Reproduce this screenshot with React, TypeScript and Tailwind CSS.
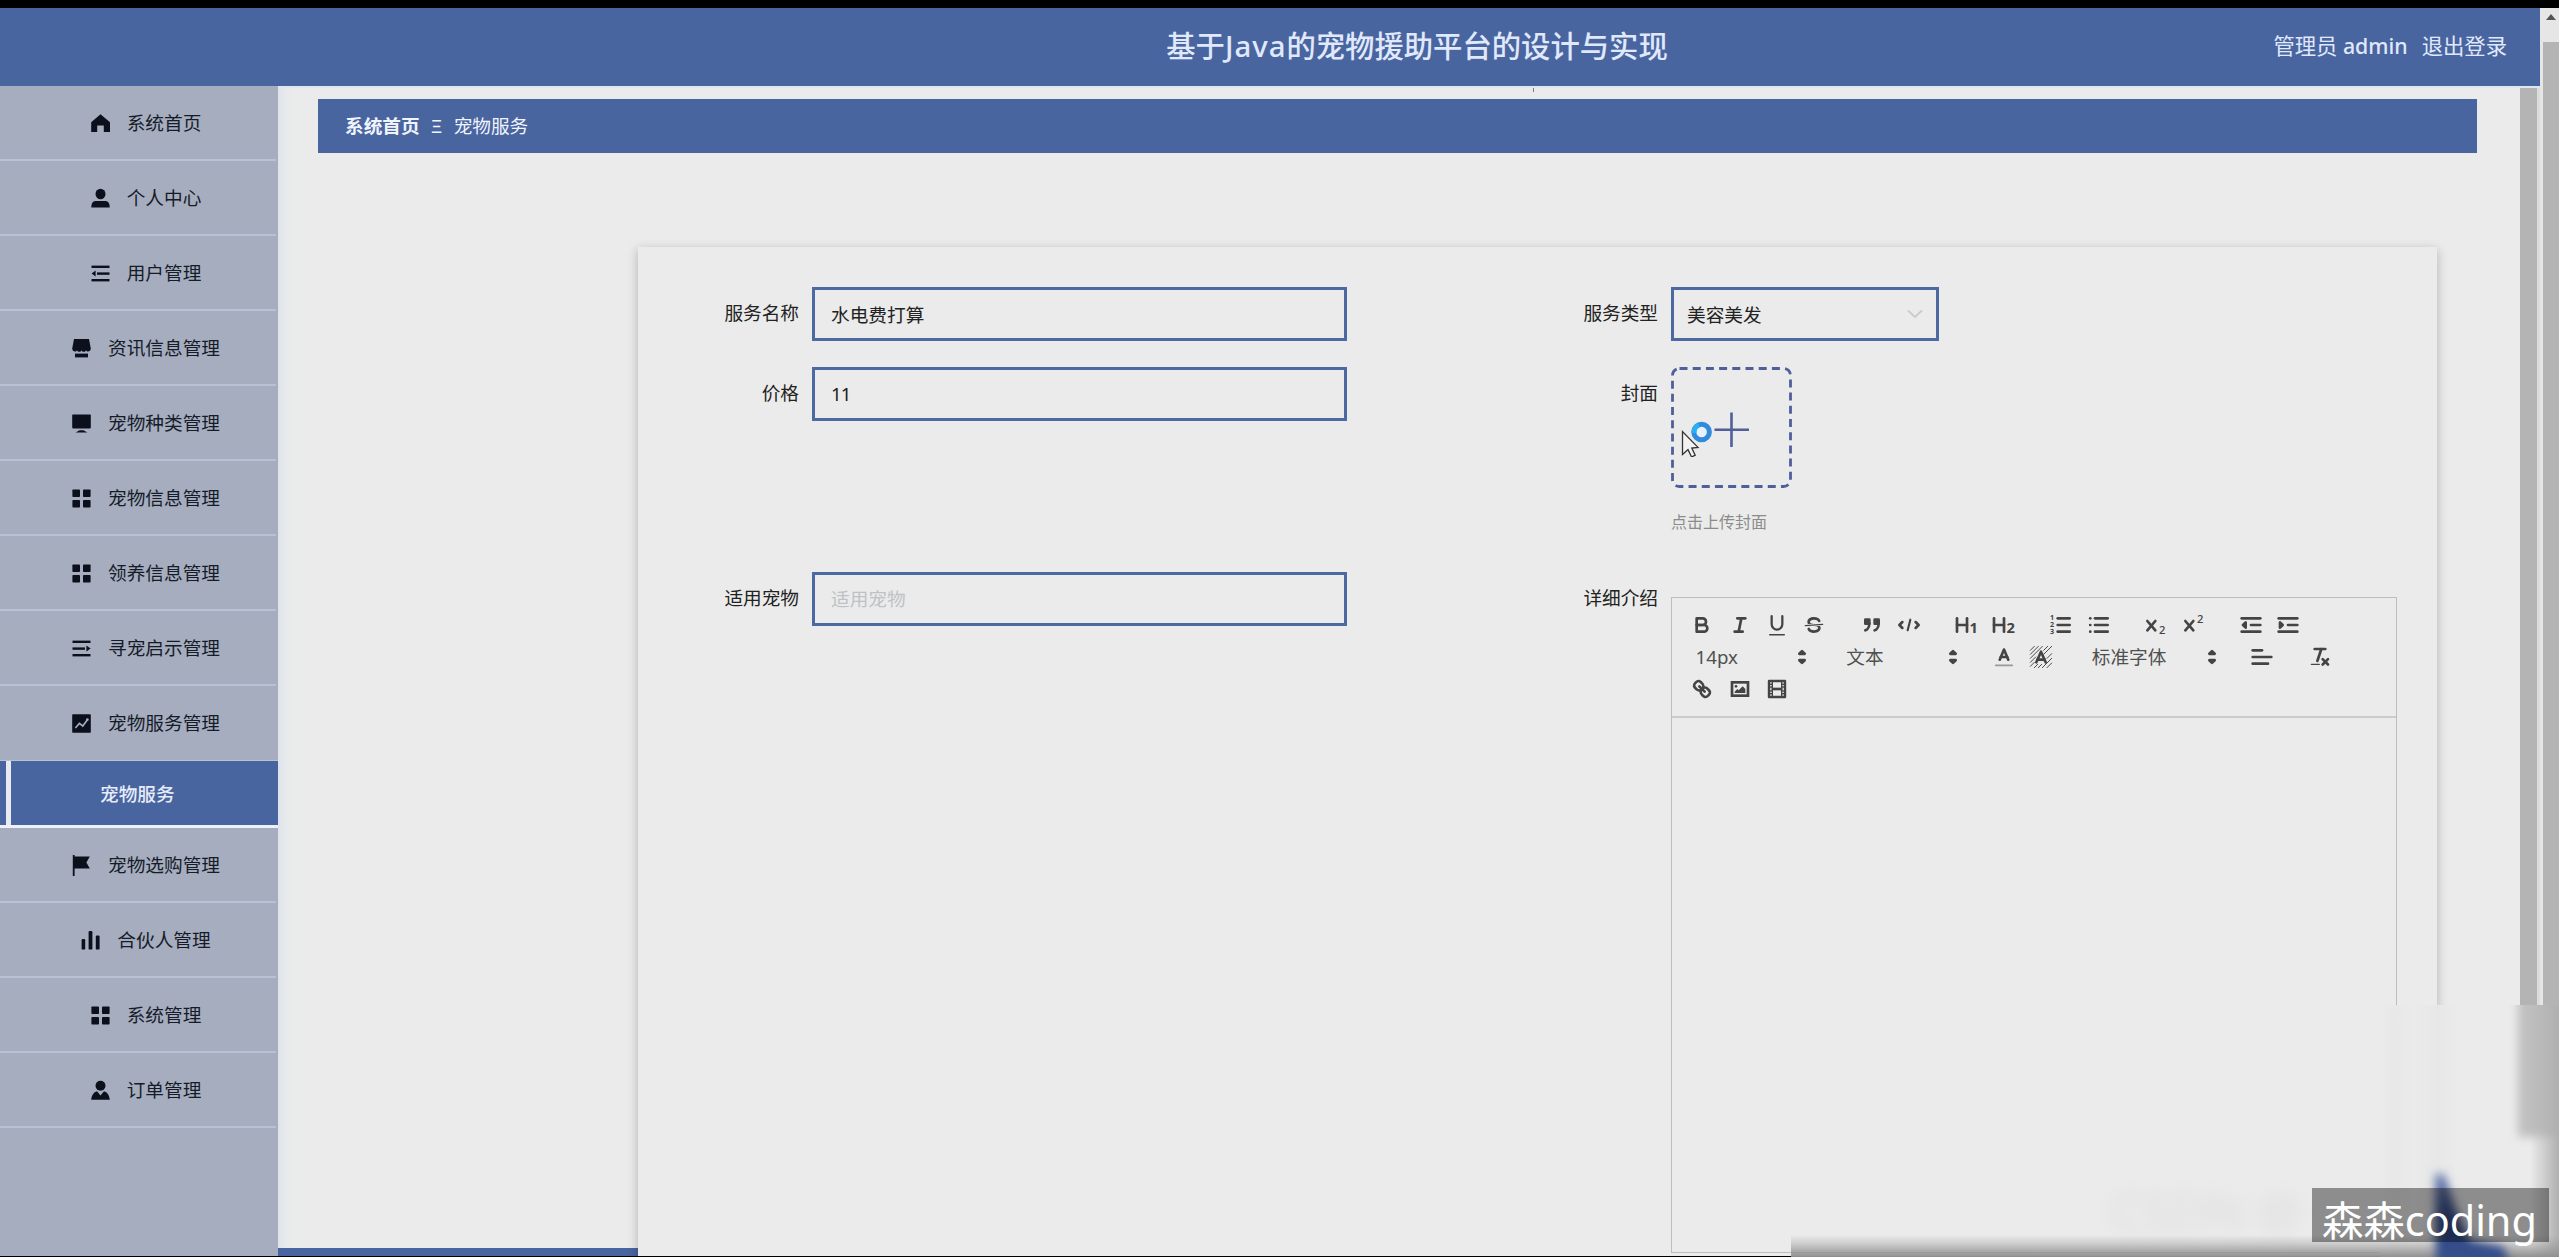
import React from "react";

const sideIcons: Record<string, React.ReactNode> = {
  home: <path d="M9.5 0.2 L19 8.2 V18 H12.8 V11.6 H6.2 V18 H0.2 V8.2 Z" />,
  user: (
    <>
      <ellipse cx="9.5" cy="5" rx="5" ry="5.2" />
      <path d="M0.3 18.5 C0.3 14 2 12 5 12 H14 C17 12 18.7 14 18.7 18.5 Z" />
    </>
  ),
  fold: (
    <>
      <rect x="0.5" y="1.6" width="18" height="2.4" />
      <rect x="6" y="8.4" width="12.5" height="2.4" />
      <rect x="0.5" y="15" width="18" height="2.4" />
      <path d="M4.6 6.6 V12.6 L0.6 9.6 Z" />
    </>
  ),
  unfold: (
    <>
      <rect x="0.5" y="1.6" width="18" height="2.4" />
      <rect x="0.5" y="8.4" width="12.5" height="2.4" />
      <rect x="0.5" y="15" width="18" height="2.4" />
      <path d="M14.4 6.6 V12.6 L18.6 9.6 Z" />
    </>
  ),
  shop: (
    <>
      <path d="M2 0 H17 L18.8 9.6 C18.8 13 14.6 13.4 14 11.2 C13.4 13.4 10 13.4 9.5 11.2 C9 13.4 5.6 13.4 5 11.2 C4.4 13.4 0.2 13 0.2 9.6 Z" />
      <path d="M3 14.6 H16 V18.4 H3 Z" />
    </>
  ),
  platform: (
    <>
      <rect x="0.2" y="0.4" width="18.6" height="14" rx="0.8" />
      <path d="M7.6 16.2 H11.4 L15.4 18.6 H3.6 Z" />
    </>
  ),
  menu: (
    <>
      <rect x="0.4" y="0.4" width="7.6" height="7.6" rx="0.8" />
      <rect x="11" y="0.4" width="7.6" height="7.6" rx="0.8" />
      <rect x="0.4" y="11" width="7.6" height="7.6" rx="0.8" />
      <rect x="11" y="11" width="7.6" height="7.6" rx="0.8" />
    </>
  ),
  marketing: (
    <>
      <rect x="0.2" y="0.2" width="18.6" height="18.6" rx="0.8" />
      <path d="M3.4 14 L7.4 9.4 L10.8 12 L15.6 5.6" fill="none" stroke="#a5adbf" strokeWidth="1.6" />
      <circle cx="15.4" cy="5.6" r="1.3" fill="#a5adbf" />
    </>
  ),
  flag: <path d="M0.8 -1 H2.6 V0.4 H17.8 L14.4 6.6 L17.8 12.6 H2.6 V20 H0.8 Z" />,
  data: (
    <>
      <rect x="0.6" y="8" width="3.6" height="10.6" rx="1.2" />
      <rect x="7.6" y="0" width="3.8" height="18.6" rx="1.2" />
      <rect x="14.8" y="4.6" width="3.8" height="14" rx="1.2" />
    </>
  ),
  custom: (
    <>
      <circle cx="9.5" cy="4.8" r="5" />
      <path d="M0.2 18.8 C0.6 14.4 2.6 11 6 10.2 L9.5 14.6 L13 10.2 C16.4 11 18.4 14.4 18.8 18.8 Z" />
    </>
  ),
};

function SideItem({ icon, label }: { icon: string; label: string }) {
  return (
    <div className="flex h-[75px] w-[276px] shrink-0 items-center justify-center gap-[17px] border-b-2 border-[#b7c2d6] pl-4 pt-[2px] text-[18.67px] leading-none text-[#161b28]">
      <svg width="19" height="19" viewBox="0 0 19 19" overflow="visible" fill="#0b101c">
        {sideIcons[icon]}
      </svg>
      <span>{label}</span>
    </div>
  );
}

const topItems: [string, string][] = [
  ["home", "系统首页"],
  ["user", "个人中心"],
  ["fold", "用户管理"],
  ["shop", "资讯信息管理"],
  ["platform", "宠物种类管理"],
  ["menu", "宠物信息管理"],
  ["menu", "领养信息管理"],
  ["unfold", "寻宠启示管理"],
];

const bottomItems: [string, string][] = [
  ["flag", "宠物选购管理"],
  ["data", "合伙人管理"],
  ["menu", "系统管理"],
  ["custom", "订单管理"],
];

function Sidebar() {
  return (
    <aside className="flex w-[278px] shrink-0 flex-col bg-[#a5adbf]">
      {topItems.map(([i, l]) => (
        <SideItem key={l} icon={i} label={l} />
      ))}
      <div className="flex h-[74px] w-[276px] shrink-0 items-center justify-center gap-[17px] pl-4 text-[18.67px] leading-none text-[#161b28]">
        <svg width="19" height="19" viewBox="0 0 19 19" fill="#0b101c">
          {sideIcons.marketing}
        </svg>
        <span>宠物服务管理</span>
      </div>
      <div className="flex h-[68px] shrink-0 border-t border-b-[3px] border-t-[#b7c2d6] border-b-[#eef1f8] bg-[#4965a0]">
        <div className="ml-[6px] w-[5px] bg-[#e9ebf1]" />
        <div className="flex items-center pl-[89px] pt-[2px] text-[18.67px] font-medium leading-none text-[#e6ecf9]">宠物服务</div>
      </div>
      {bottomItems.map(([i, l]) => (
        <SideItem key={l} icon={i} label={l} />
      ))}
    </aside>
  );
}

const L = ({ a }: { a: [number, number, number, number] }) => <line x1={a[0]} y1={a[1]} x2={a[2]} y2={a[3]} />;
const solid = { fill: "#444", stroke: "none" };
const small = "font-bold";

const ed: Record<string, React.ReactNode> = {
  bold: (
    <>
      <path d="M5,4H9.5A2.5,2.5,0,0,1,12,6.5v0A2.5,2.5,0,0,1,9.5,9H5V4Z" />
      <path d="M5,9h5.5A2.5,2.5,0,0,1,13,11.5v0A2.5,2.5,0,0,1,10.5,14H5V9Z" />
    </>
  ),
  italic: (<><L a={[7, 4, 13, 4]} /><L a={[5, 14, 11, 14]} /><L a={[8, 14, 10, 4]} /></>),
  underline: (
    <>
      <path d="M5,3V9a4.012,4.012,0,0,0,4,4H9a4.012,4.012,0,0,0,4-4V3" transform="translate(0 -0.6)" strokeWidth="1.7" />
      <rect {...solid} height="1" rx="0.5" width="12" x="3" y="15" transform="translate(0 0.8)" />
    </>
  ),
  strike: (
    <>
      <line x1="15.5" x2="2.5" y1="8.5" y2="9.5" strokeWidth="1" />
      <path {...solid} d="M9.007,8C6.542,7.791,6,7.519,6,6.5,6,5.792,7.283,5,9,5c1.571,0,2.765.679,2.969,1.309a1,1,0,0,0,1.9-.617C13.356,4.106,11.354,3,9,3,6.2,3,4,4.538,4,6.5a3.2,3.2,0,0,0,.5,1.843Z" />
      <path {...solid} d="M8.984,10C11.457,10.208,12,10.479,12,11.5c0,0.708-1.283,1.5-3,1.5-1.571,0-2.765-.679-2.969-1.309a1,1,0,1,0-1.9.617C4.644,13.894,6.646,15,9,15c2.8,0,5-1.538,5-3.5a3.2,3.2,0,0,0-.5-1.843Z" />
    </>
  ),
  quote: (
    <>
      <rect fill="#444" height="3" width="3" x="4" y="5" />
      <rect fill="#444" height="3" width="3" x="11" y="5" />
      <path d="M7,8c0,4.031-3,5-3,5" />
      <path d="M14,8c0,4.031-3,5-3,5" />
    </>
  ),
  code: (
    <>
      <polyline points="4 6.8 1.8 9 4 11.2" />
      <polyline points="14 6.8 16.2 9 14 11.2" />
      <line x1="10" x2="8" y1="5" y2="13" strokeWidth="1.6" />
    </>
  ),
  h1: (
    <>
      <L a={[1.5, 4, 1.5, 14]} /><L a={[9, 4, 9, 14]} /><L a={[1.5, 9, 9, 9]} />
      <text {...solid} x="10.8" y="14.8" fontSize="11" className={small}>1</text>
    </>
  ),
  h2: (
    <>
      <L a={[1.5, 4, 1.5, 14]} /><L a={[9, 4, 9, 14]} /><L a={[1.5, 9, 9, 9]} />
      <text {...solid} x="10.8" y="14.8" fontSize="11" className={small}>2</text>
    </>
  ),
  ol: (
    <>
      <L a={[6.5, 4, 15.5, 4]} /><L a={[6.5, 9, 15.5, 9]} /><L a={[6.5, 14, 15.5, 14]} />
      <g {...solid} fontSize="5.4" className={small}>
        <text x="0.8" y="5.4">1</text>
        <text x="0.8" y="10.6">2</text>
        <text x="0.8" y="15.8">3</text>
      </g>
    </>
  ),
  ul: (
    <>
      <L a={[6, 4, 15.5, 4]} /><L a={[6, 9, 15.5, 9]} /><L a={[6, 14, 15.5, 14]} />
      <L a={[2.4, 4, 2.5, 4]} /><L a={[2.4, 9, 2.5, 9]} /><L a={[2.4, 14, 2.5, 14]} />
    </>
  ),
  sub: (
    <>
      <L a={[2.5, 6, 8.5, 13]} /><L a={[8.5, 6, 2.5, 13]} />
      <text {...solid} x="11.2" y="16" fontSize="8.4" className="font-medium">2</text>
    </>
  ),
  sup: (
    <>
      <L a={[2.5, 6, 8.5, 13]} /><L a={[8.5, 6, 2.5, 13]} />
      <text {...solid} x="11.2" y="7.4" fontSize="8.4" className="font-medium">2</text>
    </>
  ),
  outdent: (<><L a={[2, 14, 16, 14]} /><L a={[2, 4, 16, 4]} /><L a={[9, 9, 16, 9]} /><polygon fill="#444" points="5 7 5 11 3 9" /></>),
  indent: (<><L a={[2, 14, 16, 14]} /><L a={[2, 4, 16, 4]} /><L a={[9, 9, 16, 9]} /><polygon fill="#444" points="3 7 3 11 5 9" /></>),
  color: (
    <>
      <line x1="2.8" x2="15.2" y1="15.2" y2="15.2" stroke="#999" strokeWidth="1.3" />
      <polyline points="5.8 11 9 3.4 12.2 11" />
      <L a={[11.4, 9, 6.6, 9]} />
    </>
  ),
  bg: (
    <>
      <g strokeWidth="0.75" stroke="#4c4c4c">
        <L a={[1, 4, 4, 1]} /><L a={[1, 7, 7, 1]} /><L a={[1, 10, 10, 1]} /><L a={[1, 13, 5, 9]} />
        <L a={[1, 16, 4, 13]} /><L a={[4, 17, 6.5, 14.5]} /><L a={[7, 17, 9.5, 14.5]} /><L a={[10, 17, 17, 10]} />
        <L a={[13.5, 17, 17, 13.5]} /><L a={[13.5, 10, 17, 6.5]} /><L a={[11, 7, 17, 1]} /><L a={[11, 4, 14, 1]} />
      </g>
      <polyline points="5.5 13 9 5 12.5 13" />
      <L a={[11.63, 11, 6.38, 11]} />
    </>
  ),
  align: (<><L a={[2, 9, 16, 9]} /><L a={[2, 14, 13.5, 14]} /><L a={[2, 4, 9, 4]} /></>),
  clean: (
    <>
      <L a={[5, 3, 13, 3]} /><L a={[7, 12, 10, 3]} />
      <L a={[11, 10.6, 15, 14.6]} /><L a={[15, 10.6, 11, 14.6]} />
      <rect {...solid} height="1" rx="0.5" width="7" x="2" y="14" />
    </>
  ),
  link: (
    <>
      <L a={[7, 7, 11, 11]} />
      <path d="M8.9,4.577a3.476,3.476,0,0,1,.36,4.679A3.476,3.476,0,0,1,4.577,8.9C3.185,7.5,2.035,6.4,4.217,4.217S7.5,3.185,8.9,4.577Z" />
      <path d="M13.423,9.1a3.476,3.476,0,0,0-4.679-.36,3.476,3.476,0,0,0,.36,4.679c1.392,1.392,2.5,2.542,4.679.36S14.815,10.5,13.423,9.1Z" />
    </>
  ),
  image: (
    <>
      <rect height="10" width="12" x="3" y="4" strokeLinejoin="miter" />
      <circle {...solid} cx="6" cy="7" r="1" />
      <polyline {...solid} points="5 12 5 11 7 9 8 10 11 7 13 9 13 12 5 12" />
    </>
  ),
  video: (
    <>
      <rect height="12" width="12" x="3" y="3" strokeWidth="1.8" />
      <g {...solid}>
        <rect height="12" width="1" x="5" y="3" /><rect height="12" width="1" x="12" y="3" /><rect height="2" width="8" x="5" y="8" />
        <rect height="1" width="3" x="3" y="5" /><rect height="1" width="3" x="3" y="7" /><rect height="1" width="3" x="3" y="10" /><rect height="1" width="3" x="3" y="12" />
        <rect height="1" width="3" x="12" y="5" /><rect height="1" width="3" x="12" y="7" /><rect height="1" width="3" x="12" y="10" /><rect height="1" width="3" x="12" y="12" />
      </g>
    </>
  ),
  arrows: (<><polygon fill="#444" points="7 11.4 11 11.4 9 13.4" /><polygon fill="#444" points="7 6.6 9 4.6 11 6.6" /></>),
};

function EdIcon({ name }: { name: string }) {
  return (
    <svg width="24" height="24" viewBox="0 0 18 18" overflow="visible" fill="none" stroke="#444" strokeWidth="2" strokeLinecap="round" strokeLinejoin="round" className="shrink-0">
      {ed[name]}
    </svg>
  );
}

function Group({ names }: { names: string[] }) {
  return (
    <div className="mr-5 flex">
      {names.map((n) => (
        <span key={n} className="flex h-8 w-[37.4px] items-center justify-center">
          <EdIcon name={n} />
        </span>
      ))}
    </div>
  );
}

function Picker({ label, wide }: { label: string; wide?: boolean }) {
  return (
    <div className={"mr-5 flex h-8 items-center justify-between pl-[12px] text-[18.67px] leading-none text-[#505050] " + (wide ? "w-[144px]" : "w-[130.7px]")}>
      <span>{label}</span>
      <EdIcon name="arrows" />
    </div>
  );
}

function Label({ children }: { children: React.ReactNode }) {
  return <div className="mr-[13px] flex h-[53px] w-[161px] shrink-0 items-center justify-end text-[18.67px] leading-none text-[#222]">{children}</div>;
}

const box = "flex h-[54px] items-center border-[3px] border-[#4d69a2] text-[18.67px] leading-none ";

function Card() {
  return (
    <section className="absolute left-[360px] top-[159px] grid h-[1015px] w-[1799px] grid-cols-[859px_1fr] grid-rows-[80px_205px_1fr] bg-[#ebebeb] pt-10 shadow-[0_3px_10px_rgba(0,0,0,0.25)]">
      <div className="flex">
        <Label>服务名称</Label>
        <div className={box + "w-[535px] pl-[16px] pt-[2px] text-[#222]"}>水电费打算</div>
      </div>
      <div className="flex">
        <Label>服务类型</Label>
        <div className={box + "w-[268px] justify-between pl-[13px] pr-[13px] text-[#222]"}>
          <span className="pt-[2px]">美容美发</span>
          <svg width="16" height="10" viewBox="0 0 16 10" fill="none" stroke="#c9cbce" strokeWidth="1.8"><path d="M1 1.5 L8 8 L15 1.5" /></svg>
        </div>
      </div>
      <div className="flex">
        <Label>价格</Label>
        <div className={box + "w-[535px] pl-[16px] tracking-[-1px] text-[#222]"}>11</div>
      </div>
      <div className="flex">
        <Label>封面</Label>
        <div className="flex flex-col">
          <div className="relative flex h-[121px] w-[121px] items-center justify-center">
            <svg width="121" height="121" viewBox="0 0 121 121" fill="none" stroke="#4f5f9a">
              <rect x="1.5" y="1.5" width="118" height="118" rx="7" strokeWidth="2.8" strokeDasharray="8 5.2" />
              <path d="M60.5 45.5 V80 M43.5 62.8 H78" strokeWidth="2.6" />
            </svg>
            <svg className="absolute left-[10px] top-[54px]" width="34" height="36" viewBox="0 0 34 36">
              <circle cx="20.6" cy="11" r="7.8" fill="#e8f1fa" stroke="#2f8bdc" strokeWidth="5" />
              <path d="M13 12 A7.8 7.8 0 0 1 18 3.8" fill="none" stroke="#28b0f0" strokeWidth="5" />
              <path d="M1.5 10.5 V33.5 L7 28.6 L10.6 36 L14.2 34.2 L10.8 27 L17 26.4 Z" fill="#f2f2f2" stroke="#333" strokeWidth="1.3" />
            </svg>
          </div>
          <div className="mt-[26px] text-base leading-none text-[#8b8b8b]">点击上传封面</div>
        </div>
      </div>
      <div className="flex">
        <Label>适用宠物</Label>
        <div className={box + "w-[535px] pl-[16px] text-[#bfc2c4]"}>适用宠物</div>
      </div>
      <div className="flex">
        <Label>详细介绍</Label>
        <div className="mt-[25px] flex h-[656px] w-[726px] flex-col border-[1.5px] border-[#bdbdbd]">
          <div className="flex h-[120px] shrink-0 flex-col border-b-2 border-[#cbcbcb] pl-[11.6px] pt-[11px]">
            <div className="flex">
              <Group names={["bold", "italic", "underline", "strike"]} />
              <Group names={["quote", "code"]} />
              <Group names={["h1", "h2"]} />
              <Group names={["ol", "ul"]} />
              <Group names={["sub", "sup"]} />
              <Group names={["outdent", "indent"]} />
            </div>
            <div className="flex">
              <Picker label="14px" />
              <Picker label="文本" />
              <Group names={["color", "bg"]} />
              <Picker label="标准字体" wide />
              <Group names={["align"]} />
              <Group names={["clean"]} />
            </div>
            <div className="flex">
              <Group names={["link", "image", "video"]} />
            </div>
          </div>
        </div>
      </div>
    </section>
  );
}

/* Soft smear over the lower right corner, with the author's badge on top. */
function Corner() {
  return (
    <>
      <div className="absolute left-[2380px] top-[1005px] h-[252px] w-[179px] bg-[linear-gradient(90deg,#ebebeb_0,#e8e8e8_14px,#ebebeb_34px,#e7e7e7_58px,#ebebeb_76px,#ebebeb_100%)]" />
      <svg className="absolute left-[2080px] top-[1005px]" width="479" height="252" viewBox="0 0 479 252">
        <defs>
          <filter id="soft" x="-50%" y="-20%" width="200%" height="140%"><feGaussianBlur stdDeviation="5" /></filter>
          <filter id="ghost" x="-20%" y="-50%" width="140%" height="200%"><feGaussianBlur stdDeviation="9" /></filter>
          <linearGradient id="edge" x1="0" x2="1" y1="0" y2="0">
            <stop offset="0" stopColor="#b0b0b0" stopOpacity="0" />
            <stop offset="1" stopColor="#b0b0b0" />
          </linearGradient>
          <linearGradient id="blob" x1="0" x2="0" y1="0" y2="1">
            <stop offset="0" stopColor="#6d80b4" />
            <stop offset="0.45" stopColor="#2f4680" />
            <stop offset="1" stopColor="#3b5696" />
          </linearGradient>
        </defs>
        <rect x="438" y="-30" width="70" height="162" fill="#bfbfbf" filter="url(#soft)" />
        <rect x="450" y="0" width="29" height="252" fill="url(#edge)" />
        <text x="30" y="224" fontSize="50" fill="#dcdcdc" filter="url(#ghost)">CSDN @</text>
      </svg>
      <div className="absolute left-[1791px] top-[1235px] h-[22px] w-[768px] bg-[linear-gradient(180deg,rgba(145,145,145,0)_0,rgba(145,145,145,0.35)_40%,rgba(145,145,145,1)_100%)]" />
      <svg className="absolute left-[2400px] top-[1140px]" width="159" height="117" viewBox="0 0 159 117">
        <path d="M35 34 L44 34 L58 74 L70 100 L104 107 L114 140 L36 140 Z" fill="url(#blob)" filter="url(#soft)" />
      </svg>
      <div className="absolute left-[2312px] top-[1188px] flex h-[54px] w-[237px] items-center whitespace-nowrap bg-black/40 pl-[10px] pt-[12px] text-[41.4px] leading-none text-white">
        森森coding
      </div>
    </>
  );
}

export default function App() {
  return (
    <div className="relative flex h-[1257px] w-[2559px] flex-col overflow-hidden bg-[#ebebeb] pt-2 font-['Noto_Sans','Noto_Sans_CJK_SC',sans-serif]">
      <div className="absolute inset-x-0 top-0 h-2 bg-black" />
      <div className="flex min-h-0 flex-1">
        <div className="flex w-[2540px] shrink-0 flex-col">
          <header className="relative flex h-[78px] shrink-0 items-center bg-[#4965a0] text-[#e0e9fb]">
            <h1 className="w-full pl-[294px] text-center text-[29.33px] font-medium leading-none">
              基于<span className="tracking-[1px]">Java</span>的宠物援助平台的设计与实现
            </h1>
            <div className="absolute right-[33px] top-[27px] flex text-[21.33px] leading-none">
              <span>管理员&nbsp;<span className="font-medium">admin</span></span>
              <span className="ml-[14px]">退出登录</span>
            </div>
          </header>
          <div className="flex min-h-0 flex-1">
            <Sidebar />
            <main className="relative flex min-w-0 flex-1 flex-col overflow-hidden border-t-2 border-[#dfe6ee] bg-[linear-gradient(90deg,#dfe3ea_0,#e7eaec_8px,#ebebeb_18px)]">
              <div className="absolute left-[1255px] top-[-2px] h-[6px] w-px bg-[#6f7a90]" />
              <nav className="ml-10 mt-[11px] flex h-[54px] w-[2159px] shrink-0 items-center bg-[#4965a0] pl-[27px] text-[18.67px] leading-none text-[#f0f4fc]">
                <span className="font-bold">系统首页</span>
                <span className="mx-[10px] w-[14px] text-center">Ξ</span>
                <span>宠物服务</span>
              </nav>
              <Card />
              <div className="mt-auto h-2 w-[360px] bg-[#4965a0]" />
              <div className="absolute right-0 top-0 h-full w-[20px] border-r-[3px] border-[#dcdcdc] bg-[#b4b4b4]" />
            </main>
          </div>
        </div>
        <div className="flex flex-1 flex-col bg-[#e6e6e6] pl-[3px]">
          <div className="flex h-[34px] justify-center pt-[6px]">
            <svg width="10" height="6" viewBox="0 0 10 6" fill="#555"><path d="M5 0 L10 6 H0 Z" /></svg>
          </div>
          <div className="flex-1 bg-[#b4b4b4]" />
        </div>
      </div>
      <div className="h-px w-full shrink-0 bg-black" />
      <Corner />
    </div>
  );
}
